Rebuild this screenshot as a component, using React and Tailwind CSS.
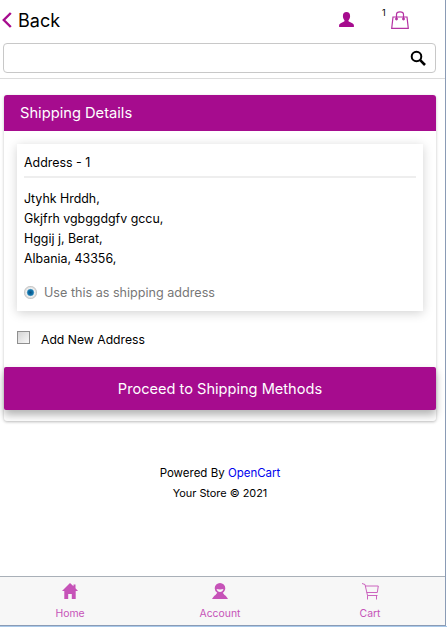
const font = { fontFamily: 'Inter' };

function BackIcon({ className }) {
  return (
    <svg className={className} viewBox="0 0 10 16" fill="none" stroke="currentColor" strokeWidth="2.4">
      <path d="M8.800 1L1.800 8l7 7" />
    </svg>
  );
}

function SearchIcon({ className }) {
  return (
    <svg className={className} viewBox="0 0 16 16" fill="none" stroke="currentColor">
      <circle cx="6.500" cy="6.500" r="4.800" strokeWidth="2" />
      <path d="M10.200 10.200L15 15" strokeWidth="2.600" />
    </svg>
  );
}

function UserIcon({ className }) {
  return (
    <svg className={className} viewBox="0 0 16 16" fill="currentColor">
      <path d="M8 0c2.300 0 3.600 1.700 3.600 3.900 0 1.600-.6 3-1.400 4-.4.5-.3 1.300.2 1.600l3.400 1.800c1 .5 1.600 1.300 1.600 2.300V15H.6v-1.400c0-1 .6-1.800 1.600-2.300l3.400-1.800c.5-.3.6-1.100.2-1.600-.8-1-1.400-2.400-1.400-4C4.400 1.700 5.700 0 8 0z" />
    </svg>
  );
}

function BagIcon({ className }) {
  return (
    <svg className={className} viewBox="0 0 18 18" fill="none" stroke="currentColor" strokeWidth="1.200">
      <path d="M2 6h14l1.300 11.400H.7z" />
      <path d="M5.500 8V3.500C5.500 1.800 7 .8 9 .8s3.500 1 3.500 2.700V8" />
      <circle cx="5.500" cy="8" r=".8" fill="currentColor" />
      <circle cx="12.500" cy="8" r=".8" fill="currentColor" />
    </svg>
  );
}

function HomeIcon({ className }) {
  return (
    <svg className={className} viewBox="0 0 16 16" fill="currentColor">
      <path d="M8 0l3.500 3.300V1.500h2v3.700L16 8h-2.300v8H9.800v-5H6.200v5H2.300V8H0z" />
    </svg>
  );
}

function AccountIcon({ className }) {
  return (
    <svg className={className} viewBox="0 0 16 16" fill="currentColor">
      <path fillRule="evenodd" d="M8 0a5.300 5.300 0 0 1 5.300 5.300c0 1.900-1 3.500-2.500 4.500L12.500 12c1 .2 2.500 2.500 3.500 4H0c1-1.500 2.500-3.800 3.500-4l1.700-2.200A5.300 5.300 0 0 1 2.700 5.300 5.300 5.300 0 0 1 8 0zM4.500 6c.6 1.900 1.800 3 3.500 3s2.900-1.100 3.500-3c-2.300.5-4.700.5-7 0z" />
    </svg>
  );
}

function CartIcon({ className }) {
  return (
    <svg className={className} viewBox="0 0 17 17" fill="none" stroke="currentColor" strokeWidth="0.9">
      <path d="M0 .5l3 1 2.500 11h10" />
      <path d="M3.300 3h13l-1 6.500H4.700" />
      <path d="M5.500 12.500v4M14.500 12.500v4" />
    </svg>
  );
}

function NavItem({ icon, label }) {
  return (
    <div className="flex flex-col items-center w-[140px]">
      <div className="h-[16px] flex items-center justify-center">{icon}</div>
      <div className="text-[10.400px] leading-[14px] mt-[8px] text-[#c653b8]">{label}</div>
    </div>
  );
}

export default function App() {
  return (
    <div className="w-[447px] h-[627px] bg-white text-black overflow-hidden" style={font}>
      <div className="w-[446px] h-[626px] flex flex-col border-r border-b border-[#8a9bb5]">
        <div className="flex items-center h-[40px] pl-[2px] shrink-0">
          <BackIcon className="w-[10px] h-[16px] text-[#a60c8e]" />
          <div className="ml-[6px] text-[18px]">Back</div>
          <UserIcon className="w-[17px] h-[16px] ml-auto text-[#a60c8e]" />
          <div className="relative ml-[36px] mr-[36px]">
            <span className="absolute left-[-9px] top-[-3px] text-[9px] leading-[10px]">1</span>
            <BagIcon className="w-[18px] h-[18px] text-[#b531a3]" />
          </div>
        </div>
        <div className="mx-[3px] w-[433px] h-[30px] mt-[3px] border border-[#c8c8c8] rounded-[4px] flex items-center justify-end pr-[9px] shrink-0">
          <SearchIcon className="w-[16px] h-[16px]" />
        </div>
        <div className="h-[1px] bg-[#dcdcdc] mt-[5px] shrink-0" />

        <div className="mx-[4px] w-[432px] mt-[16px] rounded-[3px] shadow-[0_1px_3px_rgba(0,0,0,0.25)] shrink-0">
          <div className="h-[36px] bg-[#a60c8e] rounded-t-[3px] flex items-center pl-[16px] text-white text-[14.700px]">
            Shipping Details
          </div>
          <div className="px-[13px] pt-[13px]">
            <div className="h-[167px] shadow-[0_2px_10px_rgba(0,0,0,0.18)] px-[7px]">
              <div className="h-[34px] flex items-end pb-[5px] text-[12.400px] leading-[16px] border-b-2 border-[#eeeeee]">Address - 1</div>
              <div className="mt-[11px] text-[12.400px] leading-[20px]">
                <div>Jtyhk Hrddh,</div>
                <div>Gkjfrh vgbggdgfv gccu,</div>
                <div>Hggij j, Berat,</div>
                <div>Albania, 43356,</div>
              </div>
              <div className="flex items-center mt-[14px]">
                <input
                  type="radio"
                  defaultChecked
                  className="appearance-none w-[13px] h-[13px] m-0 -mt-[2px] rounded-full bg-[radial-gradient(circle,#0b4f80_0,#1177b0_30%,#f2f2f2_45%,#d8d8d8_60%,#8f8f8f_80%,#b5b5b5_100%)]"
                />
                <span className="ml-[7px] text-[12.600px] leading-[20px] text-[#777777]">Use this as shipping address</span>
              </div>
            </div>
            <div className="flex items-center h-[56px]">
              <input
                type="checkbox"
                className="appearance-none w-[13px] h-[13px] m-0 -mt-[4px] border border-[#8f8f8f] bg-[linear-gradient(135deg,#d4d4d4,#f8f8f8)]"
              />
              <span className="ml-[11px] mt-[2px] text-[12.200px]">Add New Address</span>
            </div>
          </div>
          <div className="h-[43px] pt-[2px] bg-[#a60c8e] rounded-[2px] shadow-[0_5px_8px_rgba(0,0,0,0.3)] flex items-center justify-center text-white text-[14.600px]">
            Proceed to Shipping Methods
          </div>
          <div className="h-[11px]" />
        </div>

        <div className="mt-[42px] text-center leading-[21px] w-[440px] shrink-0">
          <div className="text-[11.500px]">Powered By <span className="text-[#0000ee]">OpenCart</span></div>
          <div className="text-[10.900px] -mt-[1px]">Your Store © 2021</div>
        </div>

        <div className="mt-auto h-[49px] bg-[#f7f7f7] border-t border-[#a9b0b8] flex gap-[10px] items-start pt-[6px] shrink-0">
          <NavItem icon={<HomeIcon className="w-[16px] h-[16px] text-[#c653b8]" />} label="Home" />
          <NavItem icon={<AccountIcon className="w-[16px] h-[16px] text-[#c653b8]" />} label="Account" />
          <NavItem icon={<CartIcon className="w-[17px] h-[17px] text-[#c653b8]" />} label="Cart" />
        </div>
      </div>
      <div className="h-[1px] bg-[#a9c9ea]" />
    </div>
  );
}
